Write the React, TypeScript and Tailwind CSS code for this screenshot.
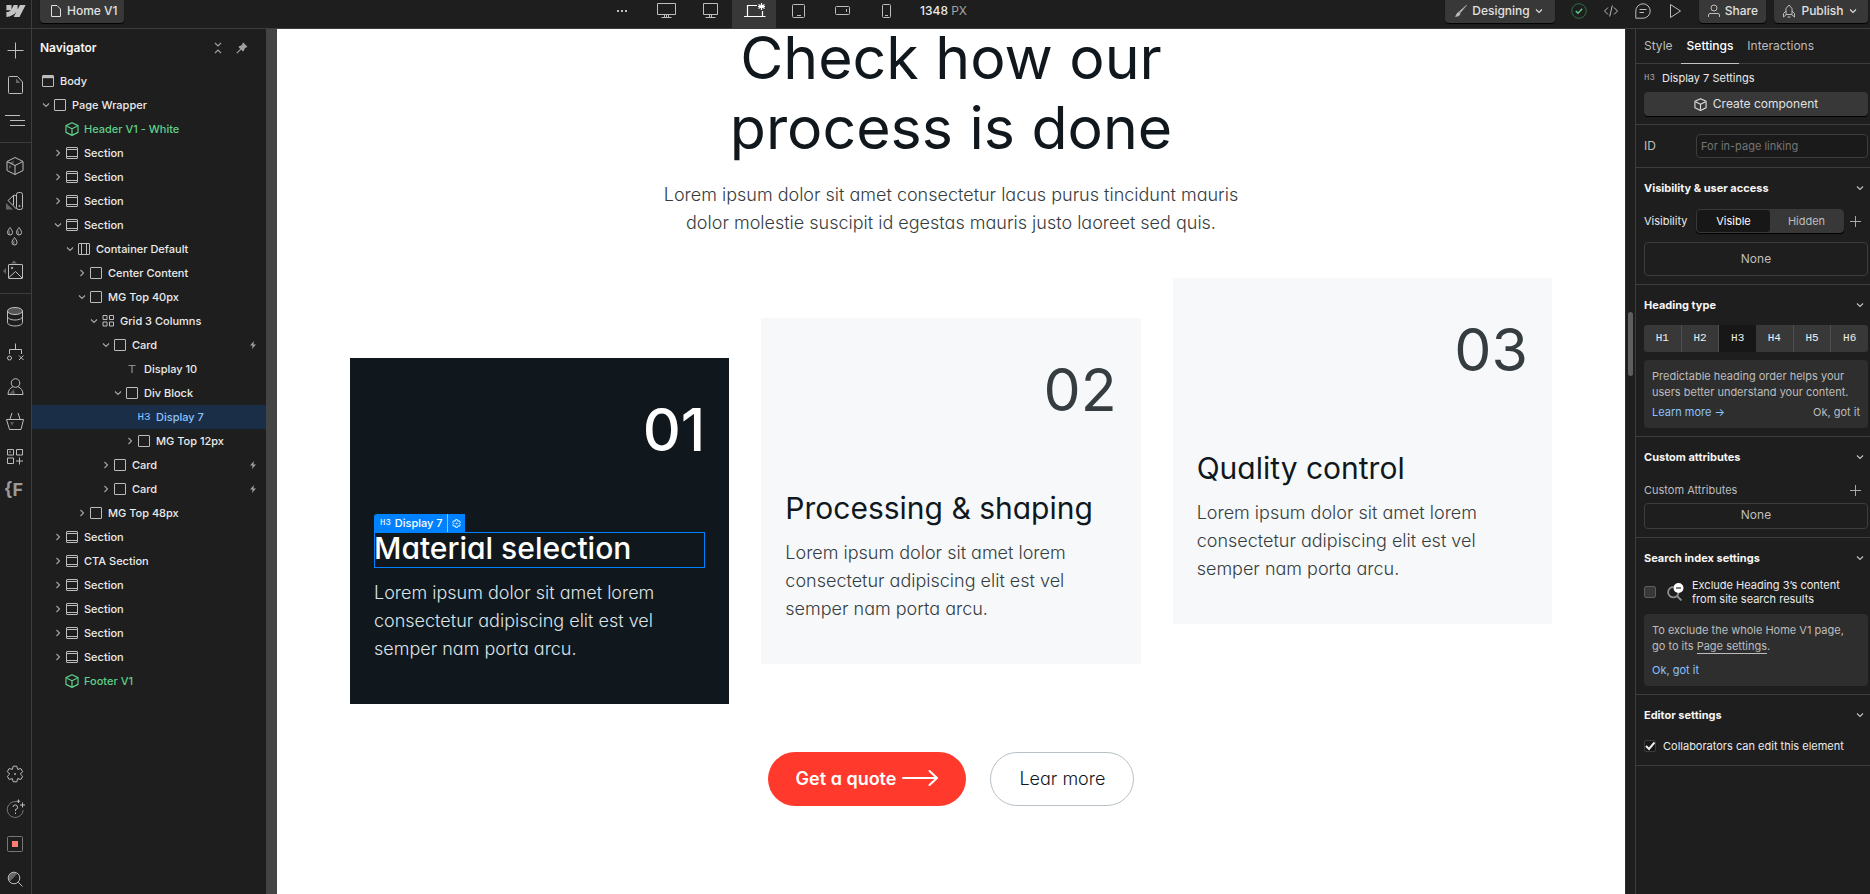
import React from 'react';
import { clsx } from 'clsx';

type IconProps = { children: React.ReactNode; size?: number; className?: string; strokeWidth?: number };

function Icon({ children, size = 18, className, strokeWidth = 1 }: IconProps) {
  return (
    <svg
      width={size}
      height={size}
      viewBox={`0 0 ${size} ${size}`}
      fill="none"
      stroke="currentColor"
      strokeWidth={strokeWidth}
      className={clsx('shrink-0', className)}
      aria-hidden="true"
    >
      {children}
    </svg>
  );
}

const ChevronDown = ({ className }: { className?: string }) => (
  <Icon size={8} className={className} strokeWidth={1.1}>
    <path d="M1 2.5 4 5.5 7 2.5" />
  </Icon>
);

const ChevronRight = ({ className }: { className?: string }) => (
  <Icon size={8} className={className} strokeWidth={1.1}>
    <path d="M2.5 1 5.5 4 2.5 7" />
  </Icon>
);

const CubeIcon = ({ size = 14 }: { size?: number }) => (
  <svg width={size} height={size} viewBox="0 0 14 14" fill="none" stroke="currentColor" strokeWidth="1.2" strokeLinejoin="round" className="shrink-0" aria-hidden="true">
    <path d="M7 .7 13 3.6V10.4L7 13.4 1 10.4V3.6ZM2 4.2 7 6.7 12 4.2M7 6.7V12.5" />
  </svg>
);

const PlusIcon = () => (
  <Icon size={11} className="text-[#a8a8a8]">
    <path d="M5.5 0V11M0 5.5H11" />
  </Icon>
);

const gearPath =
  'M7.2 1.2H10.8L11.65 4.4 14.85 3.54 16.65 6.66 14.3 9 16.65 11.34 14.85 14.46 11.65 13.6 10.8 16.8H7.2L6.35 13.6 3.15 14.46 1.35 11.34 3.7 9 1.35 6.66 3.15 3.54 6.35 4.4Z';

/* ---------- Navigator ---------- */

type Kind = 'body' | 'box' | 'section' | 'container' | 'grid' | 'component' | 'text' | 'h3';
type Node = { depth: number; kind: Kind; label: string; open?: boolean; bolt?: boolean; selected?: boolean };

const tree: Node[] = [
  { depth: 0, kind: 'body', label: 'Body' },
  { depth: 1, kind: 'box', label: 'Page Wrapper', open: true },
  { depth: 2, kind: 'component', label: 'Header V1 - White' },
  { depth: 2, kind: 'section', label: 'Section', open: false },
  { depth: 2, kind: 'section', label: 'Section', open: false },
  { depth: 2, kind: 'section', label: 'Section', open: false },
  { depth: 2, kind: 'section', label: 'Section', open: true },
  { depth: 3, kind: 'container', label: 'Container Default', open: true },
  { depth: 4, kind: 'box', label: 'Center Content', open: false },
  { depth: 4, kind: 'box', label: 'MG Top 40px', open: true },
  { depth: 5, kind: 'grid', label: 'Grid 3 Columns', open: true },
  { depth: 6, kind: 'box', label: 'Card', open: true, bolt: true },
  { depth: 7, kind: 'text', label: 'Display 10' },
  { depth: 7, kind: 'box', label: 'Div Block', open: true },
  { depth: 8, kind: 'h3', label: 'Display 7', selected: true },
  { depth: 8, kind: 'box', label: 'MG Top 12px', open: false },
  { depth: 6, kind: 'box', label: 'Card', open: false, bolt: true },
  { depth: 6, kind: 'box', label: 'Card', open: false, bolt: true },
  { depth: 4, kind: 'box', label: 'MG Top 48px', open: false },
  { depth: 2, kind: 'section', label: 'Section', open: false },
  { depth: 2, kind: 'section', label: 'CTA Section', open: false },
  { depth: 2, kind: 'section', label: 'Section', open: false },
  { depth: 2, kind: 'section', label: 'Section', open: false },
  { depth: 2, kind: 'section', label: 'Section', open: false },
  { depth: 2, kind: 'section', label: 'Section', open: false },
  { depth: 2, kind: 'component', label: 'Footer V1' },
];

function NodeIcon({ kind }: { kind: Kind }) {
  if (kind === 'component') return <CubeIcon />;
  if (kind === 'h3') return <span className="font-['Liberation_Mono',monospace] text-[11px] leading-none font-normal">H3</span>;
  if (kind === 'text')
    return (
      <Icon size={12} className="text-[#8f8f8f]">
        <path d="M2.5 2.5H9.5M6 2.5V10" strokeWidth={1.2} />
      </Icon>
    );
  if (kind === 'grid')
    return (
      <Icon size={12}>
        <path d="M1 .5h4v4h-4zM7.5 .5h4v4h-4zM1 7h4v4h-4zM7.5 7h4v4h-4z" />
      </Icon>
    );
  return (
    <Icon size={12}>
      <rect x=".5" y=".5" width="11" height="11" rx=".5" />
      {kind === 'body' && <path d="M1 2H11" strokeWidth={2.4} />}
      {kind === 'section' && <path d="M1 2.5H11M1 9.5H11" />}
      {kind === 'container' && <path d="M3.5 1V11M8.5 1V11" />}
    </Icon>
  );
}

function Navigator() {
  return (
    <aside className="flex w-[234px] shrink-0 flex-col">
      <header className="flex h-[38px] items-center pr-[18px] pl-2 text-[#f5f5f5]">
        <h2 className="flex-1 text-[12px] font-semibold">Navigator</h2>
        <button aria-label="Collapse all" className="mr-3 text-[#a0a0a0]">
          <Icon size={12}>
            <path d="M3 1 6 4 9 1M3 11 6 8 9 11" strokeWidth={1.1} />
          </Icon>
        </button>
        <button aria-label="Pin panel" className="text-[#a0a0a0]">
          <Icon size={12}>
            <path d="M7.2.6 11.4 4.8 10.4 5.6 9 6 7.8 8.8 7 9.6 2.4 5 3.2 4.2 6 3 6.4 1.6Z" fill="currentColor" stroke="none" />
            <path d="M4.8 7.2.8 11.2" strokeWidth={1.2} />
          </Icon>
        </button>
      </header>
      <ul role="tree" className="pt-0.5">
        {tree.map((n, i) => (
          <li
            key={i}
            role="treeitem"
            aria-selected={!!n.selected}
            className={clsx(
              'flex h-6 items-center pr-[9px] text-[11px] font-medium',
              n.selected ? 'bg-[#1a2f47] text-[#8ac2ff]' : n.kind === 'component' ? 'text-[#5fcf8a]' : 'text-[#ebebeb]',
            )}
            style={{ paddingLeft: n.depth * 12 }}
          >
            <span className="-ml-0.5 flex w-3 shrink-0 items-center text-[#a8a8a8]">
              {n.open === true && <ChevronDown />}
              {n.open === false && <ChevronRight />}
            </span>
            <span className={clsx('flex w-3 shrink-0 items-center justify-center', n.kind !== 'component' && n.kind !== 'h3' && 'text-[#bdbdbd]')}>
              <NodeIcon kind={n.kind} />
            </span>
            <span className="flex-1 pl-1.5 whitespace-nowrap">{n.label}</span>
            {n.bolt && (
              <Icon size={8} className="text-[#a0a0a0]">
                <path d="M5 0 1 4.6H3.6L3 8 7 3.4H4.4Z" fill="currentColor" stroke="none" />
              </Icon>
            )}
          </li>
        ))}
      </ul>
    </aside>
  );
}

/* ---------- Left rail ---------- */

type Tool = { name: string; icon: React.ReactNode };

const Drop = ({ x, y }: { x: number; y: number }) => (
  <g transform={`translate(${x} ${y})`}>
    <path d="M3 3.5V7.2A1.8 1.8 0 0 1 3 3.5Z" fill="#666" stroke="none" />
    <path d="M3 .5C2 2 .5 3.7.5 5.5a2.5 2.5 0 0 0 5 0C5.5 3.7 4 2 3 .5Z" />
  </g>
);

const railTop: Tool[][] = [
  [
    { name: 'Add', icon: <path d="M9.5 1.5V17.5M1.5 9.5H17.5" /> },
    { name: 'Pages', icon: <><path d="M3.5 .5H11.5L16.5 6V16.5a1 1 0 0 1-1 1H3.5a1 1 0 0 1-1-1V1.5a1 1 0 0 1 1-1Z" /><path d="M10 2.5V7H14.5Z" fill="#666" stroke="none" /></> },
    { name: 'Navigator', icon: <path d="M-1 4.5H14M4 9.5H19M4 14.5H19" /> },
  ],
  [
    { name: 'Components', icon: <><path d="M3 6 8 3.5 7 8ZM3 8 6 9.5 3 12Z" fill="#555" stroke="none" /><path d="M9 .5 17 4.5V13.5L9 17.5 1 13.5V4.5ZM1 4.5 9 8.5 17 4.5M9 8.5V17.5" strokeLinejoin="round" /></> },
    { name: 'Styles', icon: <><path d="M0 11 7 17.5H0Z" fill="#666" stroke="none" /><rect x="10.5" y=".5" width="6" height="17" rx="2" /><path d="M10.5 4 8 3 2 8.5 10.5 17M7.5 3.5V13" /><circle cx="13.5" cy="14" r=".6" /></> },
    { name: 'Variables', icon: <><Drop x={1} y={0} /><Drop x={10} y={0} /><Drop x={5.5} y={10} /></> },
    { name: 'Assets', icon: <><path d="M5 1.5 8-1.5 11 1.5ZM0 6-3 9 0 12Z" fill="#666" stroke="none" /><rect x="2.5" y="2.5" width="14" height="14" rx=".5" /><circle cx="6" cy="6" r=".8" /><path d="M3 15.5 9.5 9.5 16 16" /></> },
  ],
  [
    { name: 'CMS', icon: <><ellipse cx="9" cy="3" rx="7.5" ry="3.5" fill="#555" /><path d="M1.5 3V14.5C1.5 16.5 5 18 9 18S16.5 16.5 16.5 14.5V3M1.5 8.5C1.5 10.5 5 12 9 12S16.5 10.5 16.5 8.5" /></> },
    { name: 'Logic', icon: <><path d="M9.5 .5V6.5M3.5 11V6.5H15.5V11M13 12.5 17.5 17M17.5 12.5 13 17" /><circle cx="3.5" cy="15" r="2" /></> },
    { name: 'Users', icon: <><path d="M8 11 3 16H9Z" fill="#555" stroke="none" /><circle cx="9.5" cy="5" r="4.3" /><path d="M7 8.7C4 10 2 12.5 2 16.5H17C17 12.5 15 10 12 8.7" /></> },
    { name: 'Ecommerce', icon: <><path d="M4 9H8L6 13Z" fill="#555" stroke="none" /><path d="M.5 6.5H17.5L15 16.5H3.5ZM4 6 6 0M14 6 12 0" /></> },
    { name: 'Apps', icon: <><path d="M1.5 1.5h6v5.5h-6zM10.5 1.5h6v5.5h-6zM1.5 10h6v5.5h-6zM13.5 9.5V16.5M10 13H17" /><path d="M3 3h2v2H3z" fill="#666" stroke="none" /></> },
  ],
];

const railBottom: Tool[] = [
  { name: 'Settings', icon: <><path d={gearPath} strokeLinejoin="round" /><circle cx="9" cy="9" r=".5" fill="currentColor" /></> },
  { name: 'Help', icon: <><path d="M11 1.7A8 8 0 1 0 17.2 10" stroke="#777" /><path d="M7 7A2.3 2.3 0 1 1 9.5 9.5V11M9.5 12.5V14M12.5-.5V3M10.8 1.2H14.2M16.5 2.5V7.5M14 5H19" /></> },
  { name: 'Record', icon: <><rect x="1.5" y="1.5" width="15" height="15" rx="1" stroke="#777" /><path d="M6 6h6v6H6z" fill="#ff7d73" stroke="none" /></> },
  { name: 'Search', icon: <><path d="M4 11.500A5 5 0 0 1 11 4Z" fill="#666" stroke="none" /><circle cx="8" cy="8" r="5.8" /><path d="M12.3 12.3 16.5 16.5" /></> },
];

const RailButton = ({ tool }: { tool: Tool }) => (
  <button aria-label={tool.name} className="flex h-[35px] w-full items-center justify-center pr-px text-[#bdbdbd]">
    <Icon size={18} className="overflow-visible">{tool.icon}</Icon>
  </button>
);

function Rail() {
  return (
    <nav aria-label="Tools" className="flex w-8 shrink-0 flex-col border-r border-[#3d3d3d] pt-[3px]">
      {railTop.map((group, i) => (
        <div key={i}>
          {i > 0 && <hr className="my-[5px] border-[#3d3d3d]" />}
          {group.map((t) => (
            <RailButton key={t.name} tool={t} />
          ))}
        </div>
      ))}
      <button aria-label="Finsweet" className="h-8 pl-1 text-left text-[18px] leading-none font-bold text-[#9a9a9a]">
        {'{F'}
      </button>
      <div className="mt-auto -mb-0.5">
        {railBottom.map((t) => (
          <RailButton key={t.name} tool={t} />
        ))}
      </div>
    </nav>
  );
}

/* ---------- Top bar ---------- */

const barButton =
  'flex h-[23px] shrink-0 items-center rounded-b-[4px] bg-[#383838] pb-0.5 text-[12px] font-medium text-[#e0e0e0] shadow-[0_1px_1px_#000]';

const breakpoints: Tool[] = [
  { name: 'Desktop wide', icon: <path d="M.5 1.5H18.5V12.5H.5ZM7.5 13V16M9.5 13V16M11.5 13V16M4.5 15.5H14.5" /> },
  { name: 'Desktop', icon: <path d="M2.5 1.5H16.5V12.5H2.5ZM8.5 13V16M10.5 13V16M4.5 15.5H14.5" /> },
  { name: 'Base', icon: <path d="M2.5 14.5V3.5H12M17.5 9V14.5M-1 14.5H20.5M16.5 1V8M13.5 2.5 19.5 6.5M19.5 2.5 13.5 6.5M13 4.5H20" strokeWidth={1.2} /> },
  { name: 'Tablet', icon: <path d="M4.5 2.5H14.5a1 1 0 0 1 1 1V14.5a1 1 0 0 1-1 1H4.5a1 1 0 0 1-1-1V3.5a1 1 0 0 1 1-1ZM8 13.5H12" /> },
  { name: 'Mobile landscape', icon: <path d="M3.5 4.5H15.5a1 1 0 0 1 1 1V11.5a1 1 0 0 1-1 1H3.5a1 1 0 0 1-1-1V5.5a1 1 0 0 1 1-1ZM13.5 7V10" /> },
  { name: 'Mobile portrait', icon: <path d="M6.5 2.5H12.5a1 1 0 0 1 1 1V14.5a1 1 0 0 1-1 1H6.5a1 1 0 0 1-1-1V3.5a1 1 0 0 1 1-1ZM8 13.5H11" /> },
];

function TopBar() {
  return (
    <header className="flex h-[29px] shrink-0 border-b border-[#3d3d3d]">
      <button aria-label="Menu" className="flex w-8 items-start justify-center border-r border-[#3d3d3d] pt-[5px] text-[#c4c4c4]">
        <svg width="20" height="12" viewBox="0 0 1080 674" fill="currentColor" aria-hidden="true">
          <path d="M1080 0 735.4 673.7H411.7L555.9 394.5H549.5C430.5 549 252.9 650.7 0 673.7V398.3S161.8 388.8 256.9 288.8H0V0H288.7V237.5H295.2L413.2 0H631.6V236L638 236 760.4 0Z" />
        </svg>
      </button>
      <div className="flex flex-[23] items-start pl-2">
        <button className={clsx(barButton, 'w-[84px] gap-1 pl-[9px]')}>
          <Icon size={14}>
            <path d="M2.5 1.5H8L11.5 5V12.5H2.5Z" strokeLinejoin="round" />
          </Icon>
          Home V1
        </button>
      </div>
      <div className="flex">
        <button aria-label="More" className="flex h-[22px] w-11 items-center justify-center text-[#bdbdbd]">
          <svg width="10" height="2" viewBox="0 0 10 2" fill="currentColor" aria-hidden="true">
            <path d="M0 0h2v2H0zM4 0h2v2H4zM8 0h2v2H8z" />
          </svg>
        </button>
        {breakpoints.map((b) => (
          <button
            key={b.name}
            aria-label={b.name}
            className={clsx('flex h-7 w-11 justify-center pt-0.5', b.name === 'Base' ? 'bg-[#383838] text-white' : 'text-[#bdbdbd]')}
          >
            <Icon size={19} className="overflow-visible">{b.icon}</Icon>
          </button>
        ))}
        <p className="pl-3 text-[12px] leading-[22px] font-medium text-[#ebebeb]">
          1348 <span className="font-normal text-[#a3a3a3]">PX</span>
        </p>
      </div>
      <div className="flex flex-[37] items-start justify-end pr-0.5">
        <button className={clsx(barButton, 'w-[110px] justify-between pr-3 pl-2.5')}>
          <Icon size={12} className="text-[#bdbdbd]">
            <path d="M11.8 0 5.5 7.5 4.3 6.5ZM3.8 7 5.2 8.3C5 10.5 3 11.6.3 11.5 1.6 10.5 1.4 8 3.8 7Z" fill="currentColor" strokeWidth=".5" />
          </Icon>
          Designing
          <ChevronDown />
        </button>
        <div className="flex h-[22px] w-36 items-center justify-around px-2 text-[#bdbdbd]">
          <button aria-label="Saved">
            <Icon size={16}>
              <circle cx="8" cy="8" r="7.3" stroke="#2f6f47" />
              <path d="M4.8 8 7 10.2 11.2 5.8" stroke="#5fcf8a" strokeWidth={1.3} />
            </Icon>
          </button>
          <button aria-label="Code">
            <Icon size={16}>
              <path d="M5 4.5 1.5 8 5 11.5M11 4.5 14.5 8 11 11.5M9.3 2.5 6.7 13.5" />
            </Icon>
          </button>
          <button aria-label="Comments">
            <Icon size={16}>
              <path d="M8 .8A7.2 7.2 0 1 1 8 15.2H.8V8A7.2 7.2 0 0 1 8 .8ZM4.5 6.5H11.5M4.5 9.5H9" />
            </Icon>
          </button>
          <button aria-label="Preview">
            <Icon size={16}>
              <path d="M3.5 1.5 13.5 8 3.5 14.5Z" strokeLinejoin="round" />
            </Icon>
          </button>
        </div>
        <button className={clsx(barButton, 'w-[67px] justify-between px-2')}>
          <Icon size={14} className="text-[#bdbdbd]">
            <circle cx="7" cy="4" r="3" />
            <path d="M1.5 13V11a1.5 1.5 0 0 1 1.5-1.5H11A1.5 1.5 0 0 1 12.5 11V13" />
          </Icon>
          Share
        </button>
        <button className={clsx(barButton, 'ml-2 w-[94px] justify-between pr-[11px] pl-2')}>
          <Icon size={14} className="text-[#bdbdbd]">
            <path d="M4 10.5V4.5L7 1 10 4.5V10.5ZM4 7 1.5 9.5V13L4.5 10.5M10 7 12.5 9.5V13L9.5 10.5M5.5 13H8.5" />
          </Icon>
          Publish
          <ChevronDown />
        </button>
      </div>
    </header>
  );
}

/* ---------- Canvas ---------- */

const blurb = ['Lorem ipsum dolor sit amet lorem', 'consectetur adipiscing elit est vel', 'semper nam porta arcu.'];

const cards = [
  { num: '01', title: 'Material selection', offset: 'mt-20', dark: true },
  { num: '02', title: 'Processing & shaping', offset: 'mt-10', dark: false },
  { num: '03', title: 'Quality control', offset: 'mt-0', dark: false },
];

function SelectionTag() {
  return (
    <div className="absolute -top-[18px] left-0 flex h-[18px] items-center rounded-tl-[3px] bg-[#0082ff] font-[Inter,sans-serif] text-[11px] leading-none font-medium text-white [font-feature-settings:normal]">
      <span className="pr-1 pl-1.5 font-['Liberation_Mono',monospace] text-[9px] font-normal">H3</span>
      <span className="pr-1">Display 7</span>
      <span className="flex h-[18px] items-center border-l border-[#8ac2ff] px-1">
        <svg width="9" height="9" viewBox="0 0 18 18" fill="none" stroke="currentColor" strokeWidth="1.8" aria-hidden="true">
          <path d={gearPath} />
          <circle cx="9" cy="9" r="1" />
        </svg>
      </span>
    </div>
  );
}

function Canvas() {
  return (
    <main className="min-w-0 flex-1 overflow-hidden bg-white px-[73px] font-[Inter,sans-serif] [font-feature-settings:'cv11'] text-[#10181d]">
      <div className="-mt-1.5 text-center">
        <h1 className="text-[59px] leading-[70px] font-normal">
          Check how our
          <br />
          process is done
        </h1>
        <p className="mt-[18px] text-[18px] leading-7 font-light text-[#363d40]">
          Lorem ipsum dolor sit amet consectetur lacus purus tincidunt mauris
          <br />
          dolor molestie suscipit id egestas mauris justo laoreet sed quis.
        </p>
      </div>
      <div className="mt-[41px] grid grid-cols-3 items-start gap-8">
        {cards.map((c) => (
          <article key={c.num} className={clsx('px-6 py-10', c.offset, c.dark ? 'bg-[#10181d] text-white' : 'bg-[#f6f8fa]')}>
            <p className={clsx('text-right text-[59px] leading-[64px]', c.dark ? 'font-medium' : 'font-normal text-[#363d40]')}>{c.num}</p>
            <div className="relative mt-[70px]">
              {c.dark && <SelectionTag />}
              <h3
                className={clsx(
                  'h-9 text-[30px] leading-8 whitespace-nowrap',
                  c.dark ? 'font-medium outline-1 -outline-offset-1 outline-[#0082ff]' : 'font-normal',
                )}
              >
                {c.title}
              </h3>
            </div>
            <p className={clsx('mt-[11px] mb-px text-[18px] leading-7 font-light', c.dark ? 'text-[#dde3e8]' : 'text-[#363d40]')}>
              {blurb.map((line) => (
                <span key={line} className="block whitespace-nowrap">
                  {line}
                </span>
              ))}
            </p>
          </article>
        ))}
      </div>
      <div className="mt-12 flex justify-center gap-6 text-[18px]">
        <a href="#quote" className="flex h-[54px] items-center gap-1.5 rounded-full bg-[#ff3a2d] px-7 pb-0.5 font-semibold text-white">
          Get a quote
          <svg width="36" height="16" viewBox="0 0 36 16" fill="none" stroke="currentColor" strokeWidth="2" strokeLinecap="round" strokeLinejoin="round" aria-hidden="true">
            <path d="M1 8H34.5M27.5 1 35 8 27.5 15" />
          </svg>
        </a>
        <a href="#more" className="flex h-[54px] items-center rounded-full border border-[#b9c1c6] px-7 pb-0.5 font-light">
          Lear more
        </a>
      </div>
    </main>
  );
}

/* ---------- Settings panel ---------- */

function Section({ title, children, className }: { title?: string; children: React.ReactNode; className?: string }) {
  return (
    <section className={clsx('border-b border-[#3d3d3d] pr-0.5 pb-2 pl-2', className)}>
      {title && (
        <header className="flex h-10 items-center justify-between pr-1 text-[11px] font-bold text-[#f5f5f5]">
          <h3>{title}</h3>
          <ChevronDown className="text-[#c4c4c4]" />
        </header>
      )}
      {children}
    </section>
  );
}

const headings = ['H1', 'H2', 'H3', 'H4', 'H5', 'H6'];

function SettingsPanel() {
  return (
    <aside className="w-[235px] shrink-0 border-l border-[#3d3d3d] text-[11px] text-[#bdbdbd]">
      <div role="tablist" className="flex h-[35px] items-stretch border-b border-[#3d3d3d] text-[12px]">
        <button role="tab" className="px-2">Style</button>
        <button role="tab" aria-selected="true" className="-mb-px border-b border-[#c4c4c4] px-1.5 font-medium text-white">Settings</button>
        <button role="tab" className="px-2">Interactions</button>
      </div>

      <Section>
        <h2 className="flex h-7 items-center text-[#ebebeb]">
          <span className="w-[18px] font-['Liberation_Mono',monospace] text-[9px] leading-none text-[#a3a3a3]">H3</span>
          Display 7 Settings
        </h2>
        <button className="flex h-6 w-full items-center justify-center gap-1.5 rounded-[4px] bg-[#383838] text-[12px] text-[#e0e0e0] shadow-[0_1px_1px_#000]">
          <CubeIcon size={13} />
          Create component
        </button>
      </Section>

      <Section className="flex h-[43px] items-center pt-2">
        <label htmlFor="element-id" className="w-[52px] text-[12px]">ID</label>
        <input
          id="element-id"
          placeholder="For in-page linking"
          className="h-6 min-w-0 flex-1 rounded-[4px] border border-[#3d3d3d] bg-[#1a1a1a] px-1 placeholder:text-[#757575]"
        />
      </Section>

      <Section title="Visibility & user access">
        <div className="mt-px flex h-6 items-center">
          <span className="w-[52px] text-[#ebebeb]">Visibility</span>
          <div className="flex h-6 flex-1 rounded-[4px] border border-[#383838] bg-[#383838] shadow-[0_1px_1px_#000]">
            <button className="flex-1 rounded-[3px] bg-[#171717] text-white">Visible</button>
            <button className="flex-1">Hidden</button>
          </div>
          <button aria-label="Add condition" className="pr-[7px] pl-1.5">
            <PlusIcon />
          </button>
        </div>
        <div className="mt-[9px] flex h-[34px] items-center justify-center rounded-[4px] border border-[#3d3d3d] text-[12px]">None</div>
      </Section>

      <Section title="Heading type">
        <div className="flex h-[27px] overflow-hidden rounded-[3px] bg-[#383838] font-['Liberation_Mono',monospace] text-[11px] text-[#f0f0f0]">
          {headings.map((h) => (
            <button key={h} className={clsx('flex-1', h === 'H3' ? 'bg-[#171717]' : 'border-r border-[#4d4d4d] last:border-r-0')}>
              {h}
            </button>
          ))}
        </div>
        <div className="mt-2 rounded-[4px] bg-[#2e2e2e] p-2 leading-4">
          <p className="whitespace-nowrap">
            Predictable heading order helps your
            <br />
            users better understand your content.
          </p>
          <div className="mt-1 flex justify-between">
            <a href="#learn" className="text-[#8ac2ff]">Learn more →</a>
            <button>Ok, got it</button>
          </div>
        </div>
      </Section>

      <Section title="Custom attributes">
        <div className="flex h-[26px] items-center justify-between pr-[7px]">
          <span>Custom Attributes</span>
          <button aria-label="Add attribute">
            <PlusIcon />
          </button>
        </div>
        <div className="flex h-[26px] items-center justify-center rounded-[4px] border border-[#3d3d3d] pb-0.5 text-[12px]">None</div>
      </Section>

      <Section title="Search index settings">
        <label className="flex h-7 items-center leading-[14px] text-[#ebebeb]">
          <input type="checkbox" className="size-3 shrink-0 appearance-none rounded-[2px] border border-[#5e5e5e] bg-[#383838]" />
          <Icon size={18} className="mr-2 ml-2.5 text-[#8f8f8f]">
            <path d="M7.5 4A5.2 5.2 0 1 0 12.5 9.5M11 13 15.5 17.5" strokeWidth={1.8} />
            <circle cx="12.5" cy="5" r="5" fill="#fff" stroke="none" />
            <path d="M10 5H15" stroke="#555" strokeWidth={1.5} />
          </Icon>
          <span className="whitespace-nowrap">
            Exclude Heading 3’s content
            <br />
            from site search results
          </span>
        </label>
        <div className="mt-2 rounded-[4px] bg-[#2e2e2e] p-2 leading-4">
          <p className="whitespace-nowrap">
            To exclude the whole Home V1 page,
            <br />
            go to its <a href="#page" className="border-b border-[#bdbdbd]">Page settings</a>.
          </p>
          <button className="mt-2 block text-[#8ac2ff]">Ok, got it</button>
        </div>
      </Section>

      <Section title="Editor settings">
        <label className="flex h-[22px] items-center gap-[7px] text-[#ebebeb]">
          <span className="grid size-3 shrink-0">
            <input type="checkbox" defaultChecked className="col-start-1 row-start-1 size-3 appearance-none rounded-[2px] border border-[#3d3d3d] bg-[#171717]" />
            <Icon size={12} className="pointer-events-none col-start-1 row-start-1">
              <path d="M2 6 5 9 10.5 2.5" strokeWidth={2} />
            </Icon>
          </span>
          <span className="whitespace-nowrap">Collaborators can edit this element</span>
        </label>
      </Section>
    </aside>
  );
}

export default function App() {
  return (
    <div className="flex h-screen flex-col overflow-hidden bg-[#1e1e1e] font-[Inter,sans-serif]">
      <TopBar />
      <div className="flex min-h-0 flex-1">
        <Rail />
        <Navigator />
        <div className="w-[11px] shrink-0 bg-[#444]" />
        <Canvas />
        <div className="w-2.5 shrink-0 border-l border-[#2b2b2b] px-0.5 pt-[283px]">
          <div className="h-16 w-[5px] rounded-full bg-[#5e5e5e]" />
        </div>
        <SettingsPanel />
      </div>
    </div>
  );
}
